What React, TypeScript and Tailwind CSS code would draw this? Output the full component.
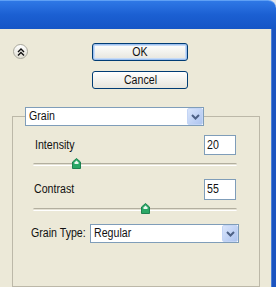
import React from "react";

function T({ children, center }: { children: React.ReactNode; center?: boolean }) {
  return (
    <span
      className={`inline-block whitespace-nowrap scale-x-[0.85] ${center ? "origin-center" : "origin-left"}`}
    >
      {children}
    </span>
  );
}

function Chevron() {
  return (
    <svg width="9" height="6" viewBox="0 0 9 6">
      <path d="M1 1 L4.5 4.5 L8 1" fill="none" stroke="#4d6185" strokeWidth="2" />
    </svg>
  );
}

function Select({ value, width }: { value: string; width: string }) {
  return (
    <div className={`${width} h-[19px] bg-white border border-[#7f9db9] flex items-center`}>
      <span className="flex-1 pl-[3px] leading-none">
        <T>{value}</T>
      </span>
      <div className="w-[16px] h-[17px] rounded-[2px] border border-[#c4d5f5] bg-gradient-to-br from-[#d9e5fb] to-[#aec4ef] flex items-center justify-center">
        <Chevron />
      </div>
    </div>
  );
}

function Thumb({ left }: { left: number }) {
  return (
    <svg
      className="absolute top-0"
      style={{ left: left - 4 }}
      width="9"
      height="11"
      viewBox="0 0 9 11"
    >
      <path d="M4.5 0.5 L8.5 4 L8.5 10.5 L0.5 10.5 L0.5 4 Z" fill="#2aa866" stroke="#1f8150" />
      <path d="M4.5 2.5 L6.5 4.5 L6.5 6 L2.5 6 L2.5 4.5 Z" fill="#e9f7ef" />
    </svg>
  );
}

function Slider({ thumb }: { thumb: number }) {
  return (
    <div className="relative h-[11px] ml-[8px] mr-[10px]">
      <div className="absolute left-0 right-0 top-[5px] h-[3px] rounded-[2px] border-t border-[#b3af9f] bg-[#e4e1d3] border-b border-b-white" />
      <Thumb left={thumb} />
    </div>
  );
}

export default function App() {
  return (
    <div className="w-[276px] h-[287px] overflow-hidden bg-[#dfe3ea] flex flex-col font-['Liberation_Sans',Arial,sans-serif] text-[12.5px] text-[#111]">
      <div className="h-[29px] shrink-0 rounded-tr-[8px] border-t border-[#5fa0f5] bg-gradient-to-b from-[#2f78e6] via-[#1b5fd2] to-[#1656c6]" />
      <div className="flex flex-1 min-h-0">
        <div className="flex-1 bg-[#ece9d8] flex flex-col">
          <div className="flex pt-[14px]">
            <div className="w-[92px] pl-[13px] pt-[1px]">
              <div className="w-[15px] h-[15px] rounded-full border border-[#a9a89c] bg-gradient-to-b from-white to-[#e0ded2] flex items-center justify-center">
                <svg width="8" height="8" viewBox="0 0 8 8">
                  <path d="M1 4 L4 1 L7 4 M1 7.5 L4 4.5 L7 7.5" fill="none" stroke="#111" strokeWidth="1.4" />
                </svg>
              </div>
            </div>
            <div className="flex flex-col gap-[10px]">
              <div className="w-[96px] h-[18px] rounded-[3px] border border-[#003c74] bg-gradient-to-b from-white to-[#e6e5dc] shadow-[inset_0_0_0_1px_#9ec0ef,inset_0_0_0_2px_#c6dbf7] flex items-center justify-center leading-none">
                <T center>OK</T>
              </div>
              <div className="w-[96px] h-[18px] rounded-[3px] border border-[#003c74] bg-gradient-to-b from-white to-[#e6e5dc] flex items-center justify-center leading-none">
                <T center>Cancel</T>
              </div>
            </div>
          </div>
          <fieldset className="mt-[18px] ml-[12px] w-[248px] h-[200px] border border-[#bcb8a8] pl-[12px] pr-[12px]">
            <legend>
              <Select value="Grain" width="w-[179px]" />
            </legend>
            <div className="mt-[9px] flex items-center h-[20px] ml-[10px] mr-[11px]">
              <span className="flex-1">
                <T>Intensity</T>
              </span>
              <div className="w-[32px] h-[20px] bg-white border border-[#7f9db9] pl-[2px] flex items-center leading-none">
                <T>20</T>
              </div>
            </div>
            <div className="mt-[3px]">
              <Slider thumb={43} />
            </div>
            <div className="mt-[10px] flex items-center h-[21px] ml-[9px] mr-[11px]">
              <span className="flex-1">
                <T>Contrast</T>
              </span>
              <div className="w-[32px] h-[21px] bg-white border border-[#7f9db9] pl-[2px] flex items-center leading-none">
                <T>55</T>
              </div>
            </div>
            <div className="mt-[3px]">
              <Slider thumb={112} />
            </div>
            <div className="mt-[10px] flex items-center ml-[6px]">
              <span className="w-[59px]">
                <T>Grain Type:</T>
              </span>
              <Select value="Regular" width="w-[149px]" />
            </div>
          </fieldset>
        </div>
        <div className="w-[5px] shrink-0 bg-[#1b54c0] border-l border-[#4d80d6]" />
      </div>
    </div>
  );
}
